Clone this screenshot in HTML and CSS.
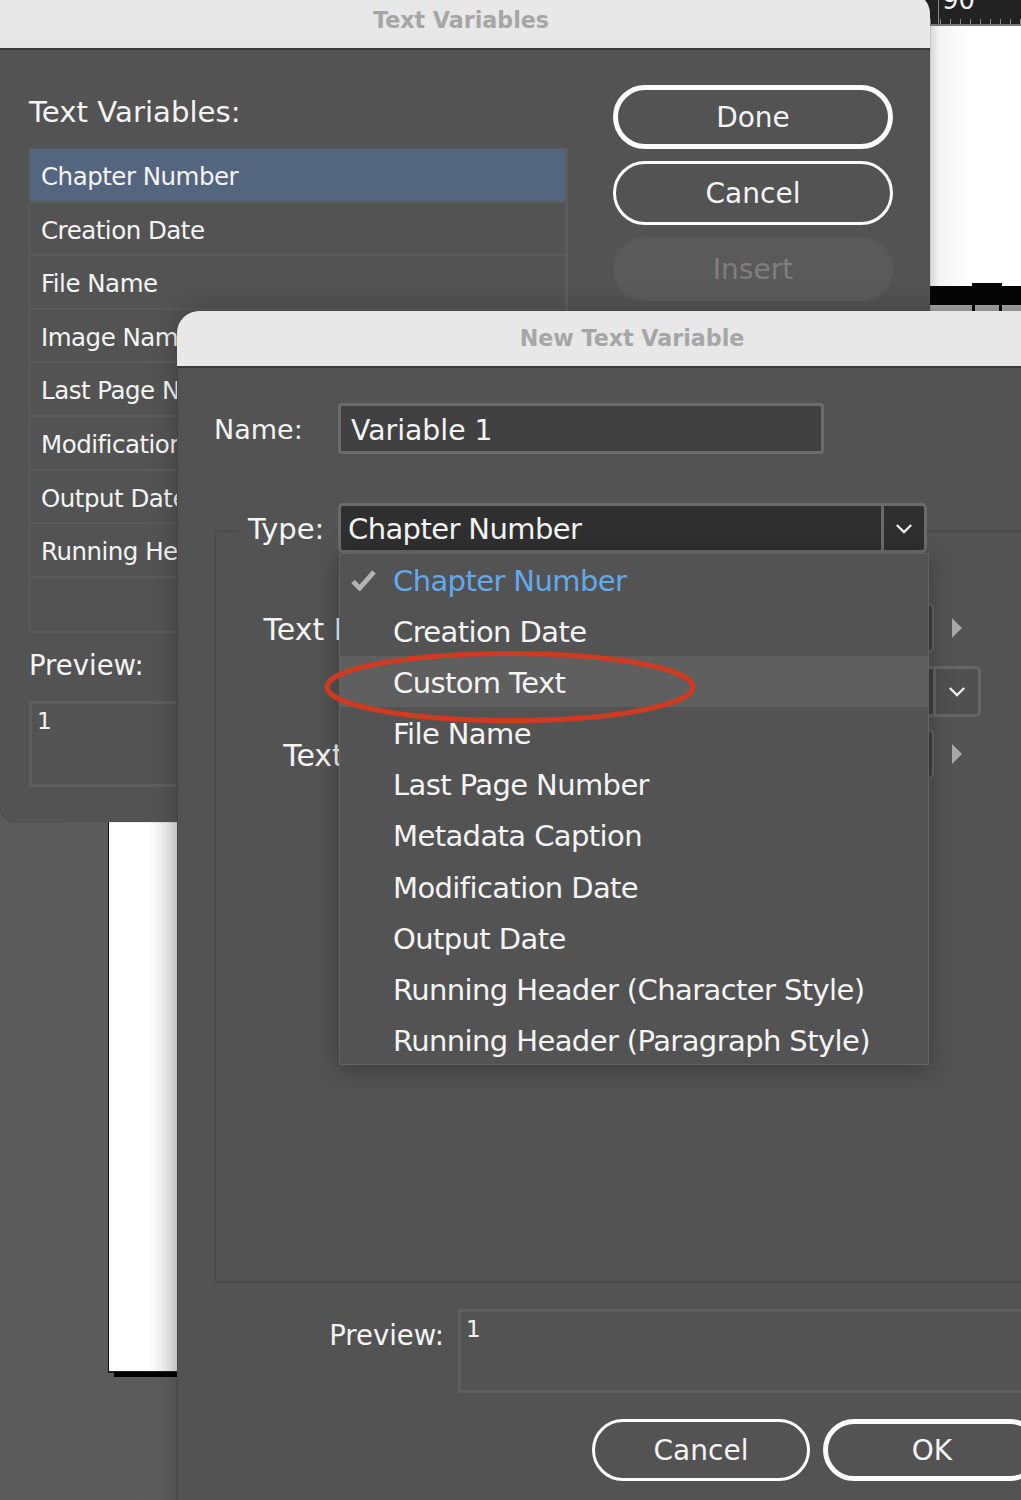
FILE: index.html
```
<!DOCTYPE html>
<html lang="en">
<head>
<meta charset="utf-8">
<title>New Text Variable</title>
<link rel="stylesheet" href="styles.css">
</head>
<body>
<div class="desktop">
  <div class="ruler"><span class="ruler-num">90</span></div>
  <div class="page-top"></div>
  <div class="page-band"></div>
  <div class="page-notch"></div>
  <div class="page-bottom"></div>
  <div class="page-edge"></div>

  <section class="window win-back">
    <header class="titlebar back-title">Text Variables</header>
    <div class="back-body">
      <div class="back-left">
        <div class="back-heading">Text Variables:</div>
        <ul class="var-list">
          <li class="var-row is-selected">Chapter Number</li>
          <li class="var-row">Creation Date</li>
          <li class="var-row">File Name</li>
          <li class="var-row">Image Name</li>
          <li class="var-row">Last Page Number</li>
          <li class="var-row">Modification Date</li>
          <li class="var-row">Output Date</li>
          <li class="var-row">Running Header</li>
        </ul>
        <div class="back-preview-label">Preview:</div>
        <div class="back-preview">1</div>
      </div>
      <div class="back-actions">
        <div class="btn btn-default">Done</div>
        <div class="btn">Cancel</div>
        <div class="btn btn-disabled">Insert</div>
      </div>
    </div>
  </section>

  <section class="window win-front">
    <header class="titlebar front-title">New Text Variable</header>
    <div class="front-body">
      <div class="name-row">
        <label class="name-label">Name:</label>
        <div class="name-input">Variable 1</div>
      </div>
      <div class="group">
        <div class="group-row">
          <span class="group-label">Text Before:</span>
          <div class="field field-before"></div>
          <svg class="tri" viewBox="0 0 10 20"><path d="M0 0L10 10L0 20Z"/></svg>
        </div>
        <div class="group-row">
          <span class="group-label">Style:</span>
          <div class="field field-style">
            <span class="field-chev"><svg class="chev" viewBox="0 0 20 12"><path d="M2 2L10 10L18 2"/></svg></span>
          </div>
        </div>
        <div class="group-row">
          <span class="group-label group-label-after">Text After:</span>
          <div class="field field-before"></div>
          <svg class="tri" viewBox="0 0 10 20"><path d="M0 0L10 10L0 20Z"/></svg>
        </div>
      </div>
      <div class="preview-row">
        <span class="preview-label">Preview:</span>
        <div class="preview-box">1</div>
      </div>
      <div class="front-actions">
        <div class="btn btn-wide">Cancel</div>
        <div class="btn btn-wide btn-default">OK</div>
      </div>
    </div>

    <div class="type-label">Type:</div>
    <div class="type-select">
      <span class="type-value">Chapter Number</span>
      <span class="type-chev"><svg class="chev" viewBox="0 0 20 12"><path d="M2 2L10 10L18 2"/></svg></span>
    </div>
    <ul class="menu">
      <li class="menu-item is-checked">
        <svg class="check" viewBox="0 0 26 22"><path d="M2 12L9 19L24 2"/></svg>Chapter Number
      </li>
      <li class="menu-item">Creation Date</li>
      <li class="menu-item is-hover">Custom Text</li>
      <li class="menu-item">File Name</li>
      <li class="menu-item">Last Page Number</li>
      <li class="menu-item">Metadata Caption</li>
      <li class="menu-item">Modification Date</li>
      <li class="menu-item">Output Date</li>
      <li class="menu-item">Running Header (Character Style)</li>
      <li class="menu-item">Running Header (Paragraph Style)</li>
    </ul>
  </section>

  <svg class="annotation" viewBox="0 0 373 75"><ellipse cx="186" cy="37" rx="183" ry="33.5"/></svg>
</div>
</body>
</html>
```

FILE: styles.css
```
* { box-sizing: border-box; }
html, body { margin: 0; padding: 0; }
body {
  width: 1021px;
  height: 1500px;
  overflow: hidden;
  font-family: "DejaVu Sans", sans-serif;
  color: #f4f4f4;
}
ul { list-style: none; margin: 0; padding: 0; }

.desktop {
  position: relative;
  width: 1021px;
  height: 1500px;
  overflow: hidden;
  background: linear-gradient(90deg, #5a5a5a, #626262 70%);
}

/* canvas behind the dialogs */
.ruler {
  position: absolute;
  left: 900px; top: 0;
  width: 121px; height: 26px;
  background:
    linear-gradient(#777, #777) 0 24px / 100% 2px no-repeat,
    repeating-linear-gradient(90deg, #8a8a8a 0 1px, transparent 1px 10px) 0 19px / 100% 5px no-repeat,
    #222;
}
.ruler-num {
  position: absolute;
  left: 38px; top: -15px;
  font-size: 26px;
  line-height: 30px;
  height: 39px;
  color: #f2f2f2;
  border-left: 1px solid #888;
  padding-left: 3px;
}
.page-top {
  position: absolute;
  left: 900px; top: 26px;
  width: 121px; height: 260px;
  background: linear-gradient(90deg, #d8d8d8 30px, #f4f4f4 40px, #fff 70px);
}
.page-band {
  position: absolute;
  left: 900px; top: 286px;
  width: 121px; height: 26px;
  background: linear-gradient(#060606 0 19px, #a6a6a6 19px);
}
.page-notch {
  position: absolute;
  left: 972px; top: 283px;
  width: 30px; height: 29px;
  background: linear-gradient(#060606 0 22px, #a6a6a6 22px);
  border: solid #060606;
  border-width: 0 3px;
}
.page-bottom {
  position: absolute;
  left: 108px; top: 820px;
  width: 72px; height: 553px;
  background: linear-gradient(90deg, #fff 40px, #dedede);
  border-left: 1px solid #111;
  border-bottom: 2px solid #222;
}
.page-edge {
  position: absolute;
  left: 114px; top: 1372px;
  width: 66px; height: 5px;
  background: #000;
}

/* dialogs */
.window {
  position: absolute;
  background: #535353;
}
.titlebar {
  background: #e8e8e8;
  color: #a6a6a6;
  font-weight: bold;
  font-size: 22.2px;
  text-align: center;
  border-bottom: 2px solid #3a3a3a;
}
.win-back {
  left: 0; top: -8px;
  width: 930px; height: 830px;
  border-radius: 0 22px 0 16px;
  overflow: hidden;
  box-shadow: 0 0 1px #2a2a2a;
}
.back-title {
  height: 58px;
  line-height: 56px;
  padding-right: 8px;
}
.back-body {
  display: flex;
  gap: 45px;
  padding-left: 29px;
}
.back-left { width: 539px; }
.back-heading {
  margin-top: 44px;
  height: 36px;
  margin-bottom: 18px;
  font-size: 29.2px;
  line-height: 36px;
}
.var-list {
  height: 485px;
  border: 2px solid #5c5c5c;
  border-left-width: 1px;
  border-top-width: 1px;
  border-right-width: 3px;
}
.var-row {
  height: 53.6px;
  padding-left: 11px;
  font-size: 24.5px;
  letter-spacing: -0.5px;
  line-height: 55px;
  border-bottom: 2px solid #5b5b5b;
  white-space: nowrap;
}
.var-row.is-selected { background: #53657f; }
.back-preview-label {
  margin-top: 14px;
  height: 36px;
  font-size: 27.5px;
  line-height: 36px;
}
.back-preview {
  margin-top: 18px;
  height: 86px;
  border: 3px solid #5e5e5e;
  padding-left: 5px;
  font-size: 23px;
  line-height: 34px;
}
.back-actions {
  display: flex;
  flex-direction: column;
  gap: 12px;
  width: 280px;
  padding-top: 35px;
}

.btn {
  height: 64px;
  border: 3px solid #fbfbfb;
  border-radius: 32px;
  display: flex;
  align-items: center;
  justify-content: center;
  font-size: 28px;
  padding-top: 1px;
}
.btn-default { border-width: 5px; }
.btn-disabled {
  border: 0;
  background: #5a5a5a;
  color: #7f7f7f;
}
.btn-wide {
  width: 218px;
  height: 62px;
  border-radius: 31px;
}

.win-front {
  left: 177px; top: 311px;
  width: 910px; height: 1240px;
  border-radius: 22px 22px 0 0;
  border-left: 1px solid #444;
  box-shadow: 0 0 24px rgba(0, 0, 0, .25);
}
.front-title {
  height: 57px;
  line-height: 54px;
  border-radius: 22px 22px 0 0;
  margin-left: -1px;
}
.front-body { padding: 35px 38px 0 36px; }
.name-row { display: flex; align-items: center; }
.name-label { width: 124px; font-size: 27px; padding-top: 2px; }
.name-input {
  width: 486px;
  height: 51px;
  background: #414141;
  border: 3px solid #6c6c6c;
  border-radius: 4px;
  padding-left: 10px;
  font-size: 28.3px;
  line-height: 49px;
}
.group {
  margin-top: 76px;
  height: 753px;
  border: 2px solid #4a4a4a;
  border-radius: 5px;
  padding-top: 71px;
  display: flex;
  flex-direction: column;
  gap: 13px;
}
.group-row {
  display: flex;
  align-items: center;
  height: 50px;
}
.group-label {
  width: 226px;
  margin-right: 16px;
  padding-top: 3px;
  text-align: right;
  font-size: 30px;
  white-space: nowrap;
}
.group-label-after { padding-right: 7px; }
.field {
  height: 50px;
  background: #414141;
  border: 2px solid #666;
  border-radius: 6px;
  display: flex;
  justify-content: flex-end;
}
.field-before { width: 476px; }
.field-style { width: 523px; height: 51px; border-width: 3px; }
.field-chev {
  width: 45px;
  border-left: 3px solid #666;
  background: #505050;
  display: flex;
  align-items: center;
  justify-content: center;
}
.tri { width: 10px; height: 20px; margin-left: 18px; fill: #a8a8a8; }
.chev { width: 18px; height: 11px; fill: none; stroke: #f2f2f2; stroke-width: 2.4; }

.preview-row {
  display: flex;
  margin-top: 26px;
}
.preview-label {
  width: 230px;
  margin-right: 14px;
  padding-top: 7px;
  text-align: right;
  font-size: 27.5px;
  line-height: 38px;
}
.preview-box {
  flex: 1;
  height: 84px;
  border: 3px solid #5e5e5e;
  padding-left: 5px;
  font-size: 23px;
  line-height: 34px;
}
.front-actions {
  display: flex;
  justify-content: flex-end;
  gap: 13px;
  margin-top: 26px;
  padding-right: 8px;
}

.type-label {
  position: absolute;
  left: 70px; top: 198px;
  padding: 0 10px;
  margin-left: -10px;
  background: #535353;
  font-size: 29px;
  line-height: 40px;
}
.type-select {
  position: absolute;
  left: 160px; top: 192px;
  width: 589px; height: 50px;
  background: #2f2f2f;
  border: 3px solid #6b6b6b;
  border-radius: 5px;
  display: flex;
  align-items: center;
  justify-content: space-between;
  font-size: 29px;
  letter-spacing: -0.6px;
}
.type-value { padding: 2px 0 0 7px; }
.type-chev {
  width: 43px;
  height: 100%;
  border-left: 3px solid #6b6b6b;
  display: flex;
  align-items: center;
  justify-content: center;
}
.menu {
  position: absolute;
  left: 161px; top: 242px;
  width: 590px; height: 512px;
  background: #535353;
  border: 1px solid #636363;
  box-shadow: 0 4px 22px rgba(0, 0, 0, .3);
  z-index: 2;
}
.menu-item {
  position: relative;
  height: 51.1px;
  padding-left: 53px;
  font-size: 29px;
  letter-spacing: -0.6px;
  line-height: 54px;
  white-space: nowrap;
}
.menu-item.is-checked { color: #63a9ec; }
.menu-item.is-hover { background: #5f5f5f; }
.check {
  position: absolute;
  left: 11px; top: 16px;
  width: 25px; height: 21px;
  fill: none;
  stroke: #b4b4b4;
  stroke-width: 5;
}

.annotation {
  position: absolute;
  left: 324px; top: 650px;
  width: 373px; height: 75px;
  fill: none;
  stroke: #cf3a20;
  stroke-width: 5;
  z-index: 5;
}
```
